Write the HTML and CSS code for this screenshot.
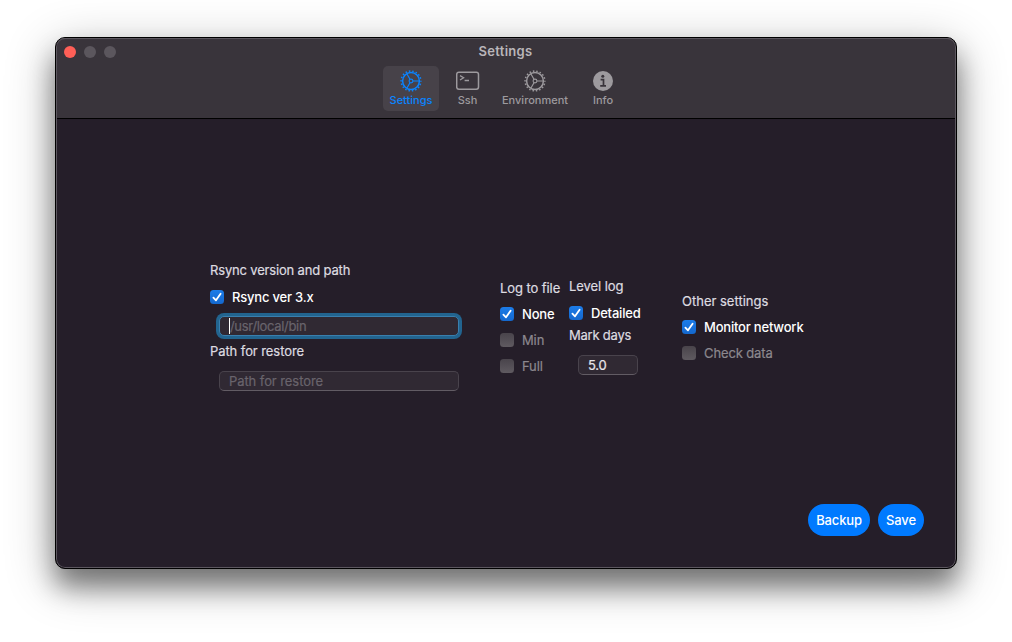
FILE: index.html
```
<!DOCTYPE html>
<html lang="en">
<head>
<meta charset="utf-8">
<title>Settings</title>
<link rel="stylesheet" href="styles.css">
</head>
<body>
<svg class="defs" width="0" height="0" aria-hidden="true">
  <symbol id="gear" viewBox="0 0 24 24">
    <circle cx="12" cy="12" r="9.9" fill="none" stroke="currentColor" stroke-width="1.5" stroke-dasharray="1.5 1.956" stroke-dashoffset="0.75"/>
    <circle cx="12" cy="12" r="8.4" fill="none" stroke="currentColor" stroke-width="1.5"/>
    <circle cx="12" cy="12" r="1.9" fill="none" stroke="currentColor" stroke-width="1.1"/>
    <path d="M14 12h6M11 10.3L7.8 4.8M11 13.7L7.8 19.2" fill="none" stroke="currentColor" stroke-width="1.2"/>
  </symbol>
  <symbol id="check" viewBox="0 0 14 14">
    <path d="M3.4 7.6L6 10.3L10.6 3.7" fill="none" stroke="#fff" stroke-width="1.8" stroke-linecap="round" stroke-linejoin="round"/>
  </symbol>
</svg>
<main class="window">
  <header class="header">
    <div class="titlebar">
      <div class="lights"><span class="light close"></span><span class="light"></span><span class="light"></span></div>
      <div class="title">Settings</div>
    </div>
    <nav class="toolbar">
      <div class="tab tab-settings active"><svg class="icon" width="24" height="24"><use href="#gear"/></svg><span>Settings</span></div>
      <div class="tab tab-ssh">
        <svg class="icon" width="24" height="24" viewBox="0 0 24 24" fill="none" stroke="currentColor"><rect x="0.7" y="3.3" width="21.8" height="17" rx="2.2" stroke-width="1.5"/><path d="M4 6.6L7.6 8.8L4 11M8.6 11.5H13" stroke-width="1.3"/></svg>
        <span>Ssh</span></div>
      <div class="tab tab-environment"><svg class="icon" width="24" height="24"><use href="#gear"/></svg><span>Environment</span></div>
      <div class="tab tab-info">
        <svg class="icon" width="24" height="24" viewBox="0 0 24 24"><circle cx="12" cy="12" r="10" fill="currentColor"/><circle cx="11.8" cy="7.2" r="1.5" fill="#39343b"/><path d="M9.6 10.7H12.5V16.6M9.2 16.8H15" fill="none" stroke="#39343b" stroke-width="1.7"/></svg>
        <span>Info</span></div>
    </nav>
  </header>
  <section class="content">
    <div class="columns">
      <div class="column col-rsync">
        <div class="label heading">Rsync version and path</div>
        <div class="option"><span class="box on"><svg width="14" height="14"><use href="#check"/></svg></span><span>Rsync ver 3.x</span></div>
        <div class="field focused"><span class="caret"></span><span>/usr/local/bin</span></div>
        <div class="label">Path for restore</div>
        <div class="field restore">Path for restore</div>
      </div>
      <div class="column col-log">
        <div class="label">Log to file</div>
        <div class="option"><span class="box on"><svg width="14" height="14"><use href="#check"/></svg></span><span>None</span></div>
        <div class="option off"><span class="box"></span><span>Min</span></div>
        <div class="option off"><span class="box"></span><span>Full</span></div>
      </div>
      <div class="column col-level">
        <div class="label">Level log</div>
        <div class="option"><span class="box on"><svg width="14" height="14"><use href="#check"/></svg></span><span>Detailed</span></div>
        <div class="label mark">Mark days</div>
        <div class="field days">5.0</div>
      </div>
      <div class="column col-other">
        <div class="label other">Other settings</div>
        <div class="option"><span class="box on"><svg width="14" height="14"><use href="#check"/></svg></span><span>Monitor network</span></div>
        <div class="option off"><span class="box"></span><span>Check data</span></div>
      </div>
    </div>
    <footer class="actions"><button class="button backup">Backup</button><button class="button save">Save</button></footer>
  </section>
</main>
</body>
</html>
```

FILE: styles.css
```
* { box-sizing: border-box; }
body {
  margin: 0;
  height: 642px;
  padding: 37px 55px 0;
  background: #fff;
  overflow: hidden;
  font-family: Inter, "Liberation Sans", sans-serif;
  font-size: 13px;
  line-height: 16px;
  white-space: nowrap;
}
.defs { display: none; }
.window {
  height: 532px;
  display: flex;
  flex-direction: column;
  border: 1px solid #000;
  border-radius: 10px;
  background: #251e29;
  box-shadow: inset 0 0 0 1px #5c575f, 0 18px 26px rgba(0,0,0,.42), 0 12px 50px rgba(0,0,0,.3);
}
.header {
  height: 81px;
  margin: 0 1px;
  border-bottom: 1px solid #000;
  background: #39343b;
  border-radius: 8px 8px 0 0;
  box-shadow: inset 0 1px 0 #5c575f;
}
.titlebar { display: grid; grid-template-columns: 1fr auto 1fr; align-items: center; height: 28px; }
.lights { display: flex; gap: 8px; padding-left: 7px; }
.light { width: 12px; height: 12px; border-radius: 50%; background: #5b565d; }
.close { background: #ff5f57; }
.title { margin: -2px 1px 0 0; font-weight: 600; color: #b9b6ba; letter-spacing: .3px; }
.toolbar { display: flex; gap: 3px; padding-left: 326px; }
.tab {
  height: 45px;
  padding-top: 3px;
  display: flex;
  flex-direction: column;
  align-items: center;
  border-radius: 5px;
  color: #9d9a9e;
  font-size: 11px;
  font-weight: 500;
  line-height: 14px;
}
.icon { display: block; }
.tab-settings { width: 56px; }
.tab-ssh { width: 51px; }
.tab-environment { width: 78px; }
.tab-info { width: 52px; }
.active { background: #474249; color: #0a84ff; }
.content { flex: 1; display: flex; flex-direction: column; justify-content: space-between; }
.columns { display: flex; align-items: flex-start; padding-left: 154px; }
.column { display: flex; flex-direction: column; align-items: flex-start; }
.col-rsync { width: 290px; padding-top: 143px; }
.col-log { width: 69px; padding-top: 161px; }
.col-level { width: 113px; padding-top: 159px; }
.col-other { padding-top: 174px; }
.label { color: #dedce0; font-weight: 400; letter-spacing: -.08px; -webkit-text-stroke: .2px; }
.heading { letter-spacing: -.17px; }
.mark { margin-top: 6px; letter-spacing: -.22px; }
.other { letter-spacing: 0; }
.option {
  display: flex;
  align-items: center;
  gap: 8px;
  height: 16px;
  margin-top: 10px;
  color: #fff;
  font-weight: 500;
  letter-spacing: -.2px;
}
.off { color: #8c888e; font-weight: 400; letter-spacing: -.12px; -webkit-text-stroke: .2px; }
.box { width: 14px; height: 14px; border-radius: 3.5px; background: linear-gradient(#49444b, #5f5a60); }
.on { background: linear-gradient(#1c7ce8, #1468ce); }
.box svg { display: block; }
.col-rsync .option, .col-level .option { margin-top: 11px; }
.field {
  display: flex;
  align-items: center;
  height: 20px;
  width: 240px;
  margin-left: 9px;
  padding-left: 9px;
  border: 1px solid #49434c;
  border-bottom-color: #625c64;
  border-radius: 5px;
  background: #302933;
  color: #69646c;
  letter-spacing: -.08px;
  -webkit-text-stroke: .2px;
}
.focused {
  margin: 11px 0 7px 9px;
  border-color: #397fae;
  box-shadow: 0 0 0 3px #22648f;
  letter-spacing: -.32px;
}
.caret { width: 1px; height: 16px; background: #fff; }
.restore { margin-top: 12px; }
.days { width: 60px; margin-top: 12px; color: #e8e6e9; letter-spacing: -.2px; }
.actions { display: flex; justify-content: flex-end; gap: 8px; padding: 0 32px 32px 0; }
.button {
  height: 32px;
  border: 0;
  padding: 0;
  border-radius: 16px;
  background: #007aff;
  color: #fff;
  font: 500 13px/16px Inter, sans-serif;
  letter-spacing: -.15px;
}
.backup { width: 62px; }
.save { width: 46px; }
```
